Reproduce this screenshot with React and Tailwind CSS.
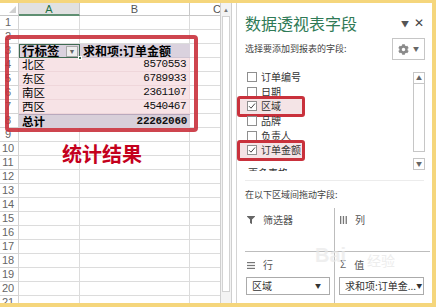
import React from "react";
import { FaCog, FaFilter } from "react-icons/fa";

const CJK = { fontFamily: '"Noto Sans CJK SC", "Noto Sans", sans-serif' };
const MONO = { fontFamily: '"Liberation Mono", monospace' };
const SANS = { fontFamily: '"Liberation Sans", "Noto Sans CJK SC", sans-serif' };

const data = {
  4: ["北区", "8570553"],
  5: ["东区", "6789933"],
  6: ["南区", "2361107"],
  7: ["西区", "4540467"],
};

function SheetRow({ n }) {
  const head = "w-[19px] shrink-0 border-r border-b border-[#d4d4d4] text-[11px] leading-[13px] text-[#666] text-center pr-[2px]";
  const cCell = "w-[55px] shrink-0 border-r border-b border-[#dcdcdc]";
  let a, b;
  if (n === 3) {
    a = (
      <div className="w-[61px] shrink-0 h-full bg-[#dad2de] border border-[#3f6b52] flex items-center pl-[2px] pr-[1px]">
        <span className="font-bold text-[12.5px] leading-none text-black" style={CJK}>行标签</span>
        <span className="ml-auto w-[12px] h-[11px] bg-[#eeeeee] border border-[#a8a8a8] flex items-center justify-center text-[7px] text-[#666] leading-none">▼</span>
      </div>
    );
    b = (
      <div className="w-[110px] shrink-0 h-full bg-[#dad2de] border-b border-[#cfc5d2] flex items-center pl-[3px]">
        <span className="font-bold text-[12px] leading-none text-black" style={CJK}>求和项:订单金额</span>
      </div>
    );
  } else if (data[n]) {
    a = (
      <div className="w-[61px] shrink-0 h-full bg-[#f7e3e6] border-b border-[#efd6da] flex items-center pl-[3px]">
        <span className="text-[11.5px] leading-none text-black" style={CJK}>{data[n][0]}</span>
      </div>
    );
    b = (
      <div className="w-[110px] shrink-0 h-full bg-[#f7e3e6] border-r border-b border-[#efd6da] flex items-center justify-end pr-[3px]">
        <span className="text-[11px] tracking-[-0.5px] leading-none text-[#111]" style={MONO}>{data[n][1]}</span>
      </div>
    );
  } else if (n === 8) {
    a = (
      <div className="w-[61px] shrink-0 h-full bg-[#d8cfd9] border-t border-[#b9a9bd] flex items-center pl-[3px]">
        <span className="font-bold text-[11.5px] leading-none text-black" style={CJK}>总计</span>
      </div>
    );
    b = (
      <div className="w-[110px] shrink-0 h-full bg-[#d8cfd9] border-t border-[#b9a9bd] flex items-center justify-end pr-[3px]">
        <span className="font-bold text-[11px] tracking-[-0.3px] leading-none text-[#111]" style={MONO}>22262060</span>
      </div>
    );
  } else {
    a = <div className="w-[61px] shrink-0 border-r border-b border-[#dcdcdc]" />;
    b = <div className="w-[110px] shrink-0 border-r border-b border-[#dcdcdc]" />;
  }
  return (
    <div className="flex h-[14px] shrink-0">
      <div className={head} style={SANS}>{n}</div>
      {a}
      {b}
      <div className={cCell} />
    </div>
  );
}

function Sheet() {
  const rows = Array.from({ length: 21 }, (_, i) => i + 1);
  return (
    <div className="relative w-[220px] h-full overflow-hidden bg-white">
      <div className="flex h-[13px] shrink-0">
        <div className="w-[19px] shrink-0 border-r border-b border-[#c8c8c8] relative bg-white">
          <div className="absolute right-[2px] bottom-[2px] w-0 h-0 border-l-[7px] border-l-transparent border-b-[7px] border-b-[#d0d0d0]" />
        </div>
        <div className="w-[61px] shrink-0 bg-[#e1e1e1] border-r border-[#c8c8c8] border-b-2 border-b-[#5f8f72] text-[11px] leading-[12px] text-center text-[#217346]" style={SANS}>A</div>
        <div className="w-[110px] shrink-0 border-r border-b border-[#c8c8c8] text-[11px] leading-[12px] text-center text-[#555]" style={SANS}>B</div>
        <div className="w-[55px] shrink-0 border-r border-b border-[#c8c8c8] text-[11px] leading-[12px] text-center text-[#555]" style={SANS}>C</div>
      </div>
      {rows.map((n) => (
        <SheetRow key={n} n={n} />
      ))}
      {/* fill handle */}
      <div className="absolute left-[78px] top-[53px] w-[4px] h-[4px] bg-[#3f6b52] border border-white" />
      {/* annotation box */}
      <div className="absolute left-[5px] top-[32px] w-[193px] h-[97px] border-[4px] border-[#c9313c]/90 rounded-[4px]" />
      <div className="absolute left-[62px] top-[140px] text-[20px] leading-[22px] font-bold text-[#c4001c]" style={CJK}>统计结果</div>
    </div>
  );
}

function SheetScroll() {
  return (
    <div className="w-[12px] h-full flex flex-col bg-[#f3f3f3] border-x border-[#cfcfcf]">
      <div className="h-[13px] flex items-center justify-center text-[6px] text-[#777] leading-none">▲</div>
      <div className="flex-1 mx-[1px] bg-white border border-[#d2d2d2]" />
      <div className="h-[11px]" />
    </div>
  );
}

function Check({ checked }) {
  return (
    <span className="w-[10px] h-[10px] shrink-0 bg-white border border-[#8f8f8f] flex items-center justify-center">
      {checked && (
        <svg width="8" height="8" viewBox="0 0 8 8">
          <path d="M1 4.2 L3 6.2 L7 1.5" fill="none" stroke="#444" strokeWidth="1" />
        </svg>
      )}
    </span>
  );
}

const fields = [
  ["订单编号", false, false],
  ["日期", false, false],
  ["区域", true, true],
  ["品牌", false, false],
  ["负责人", false, false],
  ["订单金额", true, true],
];

function Panel() {
  return (
    <div className="relative flex-1 h-full flex flex-col bg-white border-l border-[#d4d4d4]" style={CJK}>
      <div className="mt-[10px] h-[20px] flex items-center pl-[8px] pr-[8px]">
        <span className="text-[16px] leading-[20px] text-[#2f7a56]">数据透视表字段</span>
        <span className="ml-auto text-[8px] text-[#555] leading-none mt-[2px]">▼</span>
        <span className="ml-[5px] text-[12px] text-[#444] leading-none" style={SANS}>✕</span>
      </div>
      <div className="mt-[5px] h-[22px] flex items-center pl-[8px] pr-[7px]">
        <span className="text-[9px] leading-[12px] text-[#444]">选择要添加到报表的字段:</span>
        <div className="ml-auto w-[33px] h-[22px] border border-[#c6c6c6] flex items-center justify-center gap-[4px]">
          <FaCog size={11} color="#8a8a8a" />
          <span className="text-[6px] text-[#666] leading-none">▼</span>
        </div>
      </div>
      <div className="mt-[10px] h-[101px] flex overflow-hidden">
        <div className="flex-1 flex flex-col pl-[10px]">
          {fields.map(([label, checked, hl]) => (
            <div key={label} className="relative h-[14.6px] shrink-0 flex items-center gap-[4px]">
              {hl && (
                <div className="absolute -left-[10px] -top-[3px] w-[68px] h-[21px] border-[3px] border-[#c9313c] rounded-[3px] bg-[#f4e4e6]" />
              )}
              <span className="relative"><Check checked={checked} /></span>
              <span className="relative text-[10px] leading-none text-[#333]">{label}</span>
            </div>
          ))}
          <div className="mt-[8px] h-[14px] shrink-0 text-[10px] leading-[14px] text-[#333] pl-[1px]">更多表格...</div>
        </div>
        <div className="w-[12px] mr-[7px] flex flex-col pt-[2px]">
          <div className="h-[80px] border border-[#c6c6c6] flex flex-col">
            <div className="h-[11px] border-b border-[#c6c6c6] flex items-center justify-center text-[6px] text-[#666] leading-none">▲</div>
          </div>
          <div className="mt-[6px] h-[12px] border border-[#c6c6c6] flex items-center justify-center text-[6px] text-[#666] leading-none">▼</div>
        </div>
      </div>
      <div className="mt-[9px] mx-[8px] h-px bg-[#ececec]" />
      <div className="mt-[8px] pl-[8px] h-[12px] text-[9px] leading-[12px] text-[#444]">在以下区域间拖动字段:</div>
      <div className="mt-[7px] ml-[8px] mr-[2px] flex-1 grid grid-cols-[90px_1fr] grid-rows-[44px_1fr]">
        <div className="border-r border-b border-[#bdbdbd] pl-[2px] pt-[6px] flex items-start gap-[8px]">
          <span className="h-[12px] flex items-center"><FaFilter size={8} color="#666" /></span>
          <span className="text-[10px] leading-[12px] text-[#555]">筛选器</span>
        </div>
        <div className="border-b border-[#bdbdbd] pl-[5px] pt-[6px] flex items-start gap-[8px]">
          <span className="h-[12px] flex items-center">
            <svg width="7" height="8" viewBox="0 0 7 8">
              <rect x="0" y="0" width="1.3" height="8" fill="#777" />
              <rect x="2.8" y="0" width="1.3" height="8" fill="#777" />
              <rect x="5.6" y="0" width="1.3" height="8" fill="#777" />
            </svg>
          </span>
          <span className="text-[10px] leading-[12px] text-[#555]">列</span>
        </div>
        <div className="border-r border-[#bdbdbd] pt-[7px] flex flex-col">
          <div className="pl-[2px] flex items-start gap-[8px]">
            <span className="h-[12px] flex items-center">
              <svg width="8" height="7" viewBox="0 0 8 7">
                <rect x="0" y="0" width="8" height="1.2" fill="#777" />
                <rect x="0" y="2.9" width="8" height="1.2" fill="#777" />
                <rect x="0" y="5.8" width="8" height="1.2" fill="#777" />
              </svg>
            </span>
            <span className="text-[10px] leading-[12px] text-[#555]">行</span>
          </div>
          <div className="mt-[6px] ml-[1px] w-[84px] h-[18px] border border-[#ababab] flex items-center pl-[5px] pr-[8px]">
            <span className="text-[10px] leading-none text-[#333]">区域</span>
            <span className="ml-auto text-[6px] text-[#333] leading-none">▼</span>
          </div>
        </div>
        <div className="pt-[7px] flex flex-col">
          <div className="pl-[5px] flex items-start gap-[8px]">
            <span className="h-[12px] flex items-center text-[10px] text-[#666] leading-none" style={SANS}>Σ</span>
            <span className="text-[10px] leading-[12px] text-[#555]">值</span>
          </div>
          <div className="mt-[6px] ml-[4px] w-[85px] h-[18px] border border-[#ababab] flex items-center pl-[5px] pr-[4px]">
            <span className="text-[10px] leading-none text-[#333] whitespace-nowrap">求和项:订单金...</span>
            <span className="ml-auto text-[6px] text-[#333] leading-none">▼</span>
          </div>
        </div>
      </div>
      <div className="absolute left-[78px] top-[242px] text-[20px] font-bold text-[#e9e9e9] opacity-70 leading-none pointer-events-none" style={SANS}>Bai</div>
      <div className="absolute left-[130px] top-[250px] text-[14px] text-[#e6e6e6] opacity-70 leading-none pointer-events-none">经验</div>
    </div>
  );
}

export default function App() {
  return (
    <div className="w-[436px] h-[307px] bg-[#f5d67c] pt-[3px] pr-[4px] pb-[4px] overflow-hidden">
      <div className="flex h-full bg-white">
        <Sheet />
        <SheetScroll />
        <div className="w-[4px] bg-white" />
        <Panel />
      </div>
    </div>
  );
}
